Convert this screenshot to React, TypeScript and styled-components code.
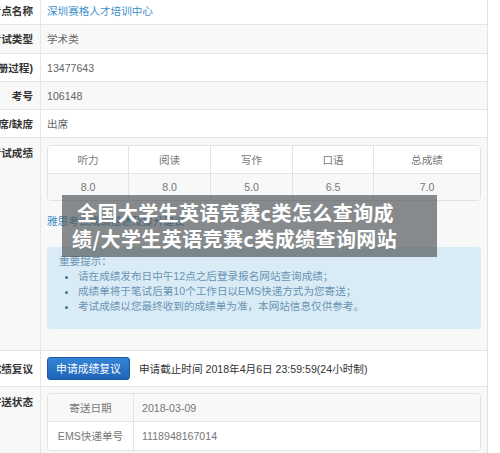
import styled, { createGlobalStyle } from "styled-components"

const Global = createGlobalStyle`
  *, *::before, *::after { box-sizing: border-box; }
  html, body { margin: 0; padding: 0; background: #fff; overflow: hidden; }
  body { font-family: "Liberation Sans", "Noto Sans CJK SC", sans-serif; font-size: 10.6px; color: #666; }
`

type Score = { nome: string; valor: string }
const SCORES: Score[] = [
  { nome: "听力", valor: "8.0" },
  { nome: "阅读", valor: "8.0" },
  { nome: "写作", valor: "5.0" },
  { nome: "口语", valor: "6.5" },
  { nome: "总成绩", valor: "7.0" },
]

const DICAS = [
  "请在成绩发布日中午12点之后登录报名网站查询成绩；",
  "成绩单将于笔试后第10个工作日以EMS快递方式为您寄送；",
  "考试成绩以您最终收到的成绩单为准，本网站信息仅供参考。",
]

const Page = styled.div`width: 500px; height: 453px; overflow: hidden; background: #fff;`
const Sheet = styled.div`
  width: 488px; margin-top: -3px;
  border-right: 1px solid #e2e2e2;
`
const Row = styled.div<{ $striped?: boolean; $h?: number }>`
  position: relative;
  display: grid; grid-template-columns: 41px 1fr;
  border-bottom: 1px solid #e4e4e4;
  background: ${p => (p.$striped ? "#f8f8f8" : "#fff")};
  ${p => (p.$h ? `height: ${p.$h}px;` : "")}
`
const Label = styled.div<{ $top?: boolean }>`
  display: flex; justify-content: flex-end;
  align-items: ${p => (p.$top ? "flex-start" : "center")};
  ${p => (p.$top ? "padding-top: 8px;" : "")}
  padding-right: 7px; overflow: hidden; white-space: nowrap;
  border-right: 1px solid #e6e6e6;
  color: #333; font-weight: bold; line-height: 14px;
`
const Cell = styled.div<{ $pad?: string }>`
  display: flex; align-items: center; gap: 9px;
  padding: ${p => p.$pad ?? "0 6px"}; line-height: 14px;
`
const Stack = styled.div`
  display: flex; flex-direction: column; align-items: stretch;
  padding: 7px 6px 8px 6px; width: 100%;
`
const SiteLink = styled.span`color: #3b8fc9;`
const LinkLine = styled.div`color: #3b8fc9; line-height: 15px; margin: 13px 0 18px;`

const ScoreTable = styled.div`
  display: grid; grid-template-columns: 81px 82px 82px 81px 1fr;
  border: 1px solid #e2e2e2; border-radius: 4px; overflow: hidden; background: #fff;
`
const ScoreCell = styled.div<{ $alt?: boolean; $last?: boolean }>`
  height: 27px; display: flex; align-items: center; justify-content: center;
  background: ${p => (p.$alt ? "#f8f8f8" : "#fff")};
  border-right: ${p => (p.$last ? "none" : "1px solid #e4e4e4")};
  border-top: ${p => (p.$alt ? "1px solid #e4e4e4" : "none")};
  color: #777;
`

const Alert = styled.div`
  background: #d9ecf6; border-radius: 4px; color: #6b93b3;
  padding: 7px 12px 15px; line-height: 15px; margin-bottom: 13px;
`
const Tips = styled.ul`
  margin: 0; padding-left: 19px; list-style: disc;
  li::marker { color: #40708f; }
`

const ReviewBtn = styled.button`
  width: 83px; height: 23px; padding: 0;
  border: 1px solid #1a5aa6; border-radius: 3px;
  background: linear-gradient(#3585d6, #1d63b8);
  color: #fff; font: inherit; font-size: 10.8px;
`
const Deadline = styled.span`color: #333;`

const ShipTable = styled.div`
  display: grid; grid-template-columns: 86px 1fr;
  border: 1px solid #e2e2e2; border-radius: 4px; overflow: hidden; width: 100%;
`
const ShipCell = styled.div<{ $alt?: boolean; $key?: boolean }>`
  height: 28px; display: flex; align-items: center;
  justify-content: ${p => (p.$key ? "center" : "flex-start")};
  padding: ${p => (p.$key ? "0" : "0 0 0 8px")};
  background: ${p => (p.$alt ? "#f8f8f8" : "#fff")};
  border-right: ${p => (p.$key ? "1px solid #e4e4e4" : "none")};
  border-bottom: ${p => (p.$alt ? "1px solid #e4e4e4" : "none")};
  color: #777;
`

// caixa de título por cima do conteúdo
const Banner = styled.div`
  position: absolute; left: 62px; top: 57px; width: 375px; height: 62px;
  padding: 5px 0 0 10px;
  background: rgba(74, 80, 84, 0.66);
  color: #fff; font-family: "Noto Sans CJK SC", sans-serif; font-weight: bold;
  font-size: 20px; line-height: 26px; letter-spacing: 0.4px;
`
const BannerLine = styled.div<{ $indent?: number }>`
  white-space: nowrap; padding-left: ${p => p.$indent ?? 0}px;
`

export default function App() {
  return (
    <Page>
      <Global />
      <Sheet>
        <Row $h={28}>
          <Label>考点名称</Label>
          <Cell><SiteLink>深圳赛格人才培训中心</SiteLink></Cell>
        </Row>
        <Row $striped $h={29}>
          <Label>考试类型</Label>
          <Cell>学术类</Cell>
        </Row>
        <Row $h={28}>
          <Label>考生号(注册过程)</Label>
          <Cell>13477643</Cell>
        </Row>
        <Row $striped $h={28}>
          <Label>考号</Label>
          <Cell>106148</Cell>
        </Row>
        <Row $h={28}>
          <Label>出席/缺席</Label>
          <Cell>出席</Cell>
        </Row>
        <Row $striped>
          <Label $top>考试成绩</Label>
          <Stack>
            <ScoreTable>
              {SCORES.map((s, i) => (
                <ScoreCell key={s.nome} $last={i === SCORES.length - 1}>{s.nome}</ScoreCell>
              ))}
              {SCORES.map((s, i) => (
                <ScoreCell key={s.nome + "v"} $alt $last={i === SCORES.length - 1}>{s.valor}</ScoreCell>
              ))}
            </ScoreTable>
            <LinkLine>雅思考试成绩描述及提升建议</LinkLine>
            <Alert>
              重要提示：
              <Tips>
                {DICAS.map(d => <li key={d}>{d}</li>)}
              </Tips>
            </Alert>
          </Stack>
          <Banner>
            <BannerLine $indent={5}>全国大学生英语竞赛c类怎么查询成</BannerLine>
            <BannerLine>绩/大学生英语竞赛c类成绩查询网站</BannerLine>
          </Banner>
        </Row>
        <Row $h={36}>
          <Label>成绩复议</Label>
          <Cell>
            <ReviewBtn>申请成绩复议</ReviewBtn>
            <Deadline>申请截止时间 2018年4月6日 23:59:59(24小时制)</Deadline>
          </Cell>
        </Row>
        <Row $striped>
          <Label $top>寄送状态</Label>
          <Cell $pad="6px 6px 8px 6px">
            <ShipTable>
              <ShipCell $alt $key>寄送日期</ShipCell>
              <ShipCell $alt>2018-03-09</ShipCell>
              <ShipCell $key>EMS快递单号</ShipCell>
              <ShipCell>1118948167014</ShipCell>
            </ShipTable>
          </Cell>
        </Row>
      </Sheet>
    </Page>
  )
}
